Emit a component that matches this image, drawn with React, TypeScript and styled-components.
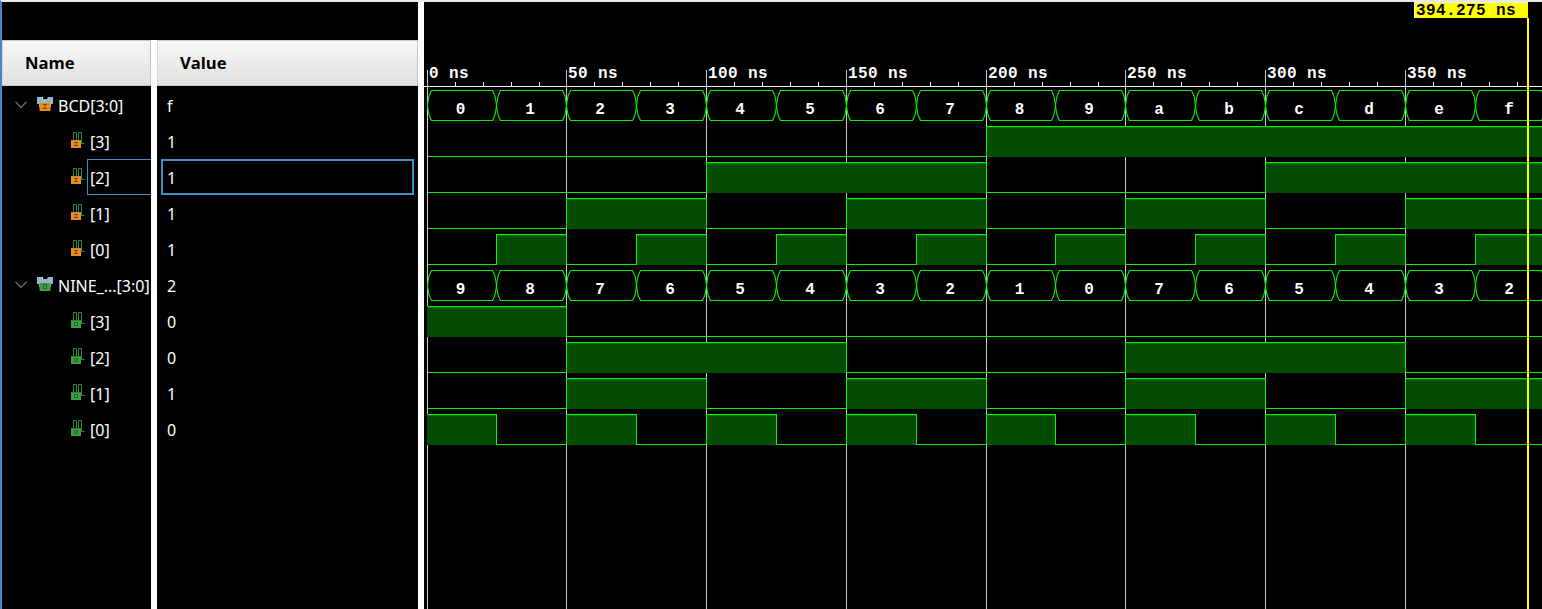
import styled, { createGlobalStyle } from "styled-components"

const GlobalStyle = createGlobalStyle`
  html, body {
    margin: 0;
    padding: 0;
    background: #000;
    overflow: hidden;
  }
`

type Signal = {
  name: string
  value: string
  kind: "in" | "out"
  depth: 0 | 1
  selected?: boolean
}

const SIGNALS: Signal[] = [
  { name: "BCD[3:0]", value: "f", kind: "in", depth: 0 },
  { name: "[3]", value: "1", kind: "in", depth: 1 },
  { name: "[2]", value: "1", kind: "in", depth: 1, selected: true },
  { name: "[1]", value: "1", kind: "in", depth: 1 },
  { name: "[0]", value: "1", kind: "in", depth: 1 },
  { name: "NINE_...[3:0]", value: "2", kind: "out", depth: 0 },
  { name: "[3]", value: "0", kind: "out", depth: 1 },
  { name: "[2]", value: "0", kind: "out", depth: 1 },
  { name: "[1]", value: "1", kind: "out", depth: 1 },
  { name: "[0]", value: "0", kind: "out", depth: 1 },
]

const BCD_DATA = [0, 1, 2, 3, 4, 5, 6, 7, 8, 9, 10, 11, 12, 13, 14, 15]
const NINE_DATA = [9, 8, 7, 6, 5, 4, 3, 2, 1, 0, 7, 6, 5, 4, 3, 2]

// pixel columns of the 25 ns steps, as the simulator rounds them
const EDGES = [
  427.5, 496.5, 566.5, 636.5, 706.5, 776.5, 846.5, 916.5, 986.5, 1055.5, 1125.5, 1195.5, 1265.5, 1335.5, 1405.5,
  1475.5, 1545.5,
]
const MONO = "'Liberation Mono', monospace"
const rowY = (i: number) => 105 + 36 * i

const BusWave = ({ row, data }: { row: number; data: number[] }) => {
  const c = rowY(row) + 0.5
  const top = c - 15
  const bot = c + 15
  return (
    <g>
      {data.map((v, i) => {
        const a = EDGES[i]
        const b = EDGES[i + 1]
        const d = [
          `M${a} ${c} L${a + 0.7} ${c - 5} L${a + 1.7} ${c - 10} L${a + 4} ${top}`,
          `L${b - 4} ${top} L${b - 1.7} ${c - 10} L${b - 0.7} ${c - 5} L${b} ${c}`,
          `L${b - 0.7} ${c + 5} L${b - 1.7} ${c + 10} L${b - 4} ${bot}`,
          `L${a + 4} ${bot} L${a + 1.7} ${c + 10} L${a + 0.7} ${c + 5} Z`,
        ].join(" ")
        return (
          <g key={i}>
            <path d={d} fill="none" stroke="#0cf00c" strokeWidth="1.1" />
            <text x={(a + b) / 2 - 1.5} y={rowY(row) + 9} textAnchor="middle" fill="#fff" fontFamily={MONO} fontWeight="700" fontSize="16">
              {v.toString(16)}
            </text>
          </g>
        )
      })}
    </g>
  )
}

const BitWave = ({ row, data, bit }: { row: number; data: number[]; bit: number }) => {
  const c = rowY(row)
  const hi = c - 14.5
  const lo = c + 15.5
  const levels = data.map((v) => (v >> bit) & 1)
  let d = `M${EDGES[0]} ${levels[0] ? hi : lo}`
  levels.forEach((l, i) => {
    const y = l ? hi : lo
    d += ` L${EDGES[i]} ${y} L${EDGES[i + 1]} ${y}`
  })
  return (
    <g shapeRendering="crispEdges">
      {levels.map((l, i) =>
        l ? (
          <g key={i}>
            <rect x={EDGES[i] - 0.5} y={hi - 0.5} width={EDGES[i + 1] - EDGES[i]} height={31} fill="#024b02" />
            <rect x={EDGES[i] - 0.5} y={hi + 0.5} width={EDGES[i + 1] - EDGES[i]} height={1} fill="#067206" />
          </g>
        ) : null
      )}
      <path d={d} fill="none" stroke="#0cf00c" strokeWidth="1" />
    </g>
  )
}

const Ruler = () => {
  const majors = EDGES.filter((_, i) => i % 2 === 0).slice(0, 8)
  return (
    <g shapeRendering="crispEdges">
      <line x1="424" x2="1542" y1="86.5" y2="86.5" stroke="#f2f2f2" />
      {majors.map((x) => (
        <g key={x}>
          <line x1={x} x2={x} y1={70} y2={609} stroke="#c8c8c8" />
          {[28, 56, 84, 112].map((dx) => (
            <line key={dx} x1={x + dx} x2={x + dx} y1={82} y2={86} stroke="#f2f2f2" />
          ))}
        </g>
      ))}
      {majors.map((x, i) => (
        <RulerText key={x} x={x + 1.5} y={78}>
          {i * 50} ns
        </RulerText>
      ))}
    </g>
  )
}

const BusIcon = ({ kind }: { kind: Signal["kind"] }) => {
  const box = kind === "in" ? "#ee8a1c" : "#3f9d46"
  const mark = kind === "in" ? "#6b4a1e" : "#1f6b2a"
  return (
    <BusIconSvg width="16" height="14" viewBox="0 0 16 14">
      <path d="M0 0h5l1 2h4l1-2h5v7h-2v3H2V7H0z" fill="#93b7cc" />
      <rect x="5" y="0" width="1" height="2" fill="#e6eef3" />
      <rect x="2.5" y="5" width="11" height="9" fill={box} />
      <rect x="2.5" y="5" width="11" height="1" fill="#a7b39e" />
      {kind === "in" ? (
        <path d="M6 7h4v1H8.5v3H10v1H6v-1h1.5V8H6z" fill={mark} />
      ) : (
        <path d="M6 7h4v5H6zM7 8v3h2V8z" fill={mark} />
      )}
    </BusIconSvg>
  )
}

const BitIcon = ({ kind }: { kind: Signal["kind"] }) => {
  const box = kind === "in" ? "#ee8a1c" : "#3f9d46"
  const mark = kind === "in" ? "#6b4a1e" : "#1f6b2a"
  return (
    <BitIconSvg width="14" height="16" viewBox="0 0 14 16">
      <path d="M2.5 8V0.5H5.5V8M7.5 8V0.5H10.5V11.5H13.5" fill="none" stroke="#2f8a3c" strokeWidth="1" />
      <rect x="0" y="8" width="10" height="8" fill={box} />
      <rect x="0" y="8" width="10" height="1" fill={kind === "in" ? "#b08a4a" : "#2f7d38"} />
      {kind === "in" ? (
        <path d="M3 10h4v1H5.5v2H7v1H3v-1h1.5v-2H3z" fill={mark} />
      ) : (
        <path d="M3 10h4v4H3zM4 11v2h2v-2z" fill={mark} />
      )}
    </BitIconSvg>
  )
}

const Chevron = () => (
  <ChevronSvg width="12" height="8" viewBox="0 0 12 8">
    <path d="M0.5 0.8L6 6.5L11.5 0.8" fill="none" stroke="#6a6a6a" strokeWidth="1.4" />
  </ChevronSvg>
)

export default function App(): JSX.Element {
  return (
    <Page>
      <GlobalStyle />
      <LeftPane>
        <TopBand />
        <Columns>
          <NameColumn>
            <ColumnHeader $indent={22}>Name</ColumnHeader>
            {SIGNALS.map((s, i) => (
              <NameRow key={i} $depth={s.depth}>
                {s.depth === 0 && <Chevron />}
                {s.depth === 0 ? <BusIcon kind={s.kind} /> : <BitIcon kind={s.kind} />}
                <NameLabel $depth={s.depth} $selected={s.selected}>
                  {s.name}
                </NameLabel>
              </NameRow>
            ))}
          </NameColumn>
          <ValueColumn>
            <ColumnHeader $indent={22}>Value</ColumnHeader>
            {SIGNALS.map((s, i) => (
              <ValueRow key={i}>
                <ValueCell $selected={s.selected}>{s.value}</ValueCell>
              </ValueRow>
            ))}
          </ValueColumn>
        </Columns>
      </LeftPane>
      <WavePane>
        <WaveSvg width="1118" height="607" viewBox="424 2 1118 607">
          <Ruler />
          <BusWave row={0} data={BCD_DATA} />
          {[3, 2, 1, 0].map((bit, i) => (
            <BitWave key={bit} row={i + 1} data={BCD_DATA} bit={bit} />
          ))}
          <BusWave row={5} data={NINE_DATA} />
          {[3, 2, 1, 0].map((bit, i) => (
            <BitWave key={bit} row={i + 6} data={NINE_DATA} bit={bit} />
          ))}
        </WaveSvg>
        <CursorLine />
        <CursorLabel>394.275 ns</CursorLabel>
      </WavePane>
    </Page>
  )
}

const Page = styled.div`
  width: 1542px;
  height: 609px;
  box-sizing: border-box;
  display: flex;
  background: #000;
  border-top: 2px solid #e9e9e9;
  border-left: 2px solid #4a80cc;
  overflow: hidden;
`

const LeftPane = styled.div`
  width: 416px;
  flex: none;
  display: flex;
  flex-direction: column;
`

const TopBand = styled.div`
  height: 38px;
  flex: none;
  background: #000;
`

const Columns = styled.div`
  flex: 1;
  display: flex;
  gap: 6px;
  background: #fff;
`

const NameColumn = styled.div`
  width: 149px;
  flex: none;
  background: #000;
  overflow: hidden;
`

const ValueColumn = styled.div`
  flex: 1;
  background: #000;
`

const ColumnHeader = styled.div<{ $indent: number }>`
  height: 46px;
  box-sizing: border-box;
  margin-bottom: 1px;
  padding-bottom: 1px;
  display: flex;
  align-items: center;
  padding-left: ${(p) => p.$indent}px;
  background: linear-gradient(#f6f6f6, #e0e0e2);
  border: 1px solid #c4c4c4;
  border-left-color: #d8d8d8;
  color: #000;
  font-family: "Open Sans", sans-serif;
  font-weight: 700;
  font-size: 16.6px;
`

const NameRow = styled.div<{ $depth: 0 | 1 }>`
  height: 36px;
  display: flex;
  align-items: center;
  padding-left: ${(p) => (p.$depth === 0 ? 13 : 69)}px;
  white-space: nowrap;
`

const BusIconSvg = styled.svg`
  flex: none;
  display: block;
  margin-top: -2px;
`

const BitIconSvg = styled.svg`
  flex: none;
  display: block;
  margin-top: -2px;
`

const ChevronSvg = styled.svg`
  flex: none;
  display: block;
  margin-right: 10px;
  margin-top: -1px;
`

const NameLabel = styled.div<{ $depth: 0 | 1; $selected?: boolean }>`
  margin-left: ${(p) => (p.$depth === 0 ? 5 : p.$selected ? 2 : 5)}px;
  height: 36px;
  line-height: 38px;
  box-sizing: border-box;
  color: #fff;
  font-family: "Noto Sans", sans-serif;
  font-size: 16px;
  ${(p) =>
    p.$selected &&
    `
    flex: 1;
    padding-left: 2px;
    border: 1px solid #3f8fc9;
    border-right: none;
    line-height: 36px;
  `}
`

const ValueRow = styled.div`
  height: 36px;
  padding: 0 4px;
  display: flex;
  align-items: center;
`

const ValueCell = styled.div<{ $selected?: boolean }>`
  flex: 1;
  height: 36px;
  line-height: 38px;
  box-sizing: border-box;
  padding-left: 6px;
  color: #fff;
  font-family: "Noto Sans", sans-serif;
  font-size: 16px;
  ${(p) =>
    p.$selected &&
    `
    border: 2px solid #3f8fc9;
    padding-left: 4px;
    line-height: 34px;
  `}
`

const WavePane = styled.div`
  position: relative;
  flex: 1;
  border-left: 6px solid #fff;
  background: #000;
`

const WaveSvg = styled.svg`
  display: block;
`

const RulerText = styled.text`
  fill: #fff;
  font-family: "Liberation Mono", monospace;
  font-weight: 700;
  font-size: 16px;
  letter-spacing: 0.4px;
`

const CursorLine = styled.div`
  position: absolute;
  left: 1103px;
  top: 16px;
  bottom: 0;
  width: 2px;
  background: #ffff00;
`

const CursorLabel = styled.div`
  position: absolute;
  left: 990px;
  top: 0;
  width: 114px;
  height: 16px;
  box-sizing: border-box;
  padding-left: 1px;
  background: #ffff00;
  border-top: 1px solid #f0f0f0;
  border-left: 1px solid #f0f0f0;
  color: #000;
  font-family: "Liberation Mono", monospace;
  font-weight: 700;
  font-size: 16px;
  letter-spacing: 0.4px;
  line-height: 16px;
  white-space: nowrap;
`
